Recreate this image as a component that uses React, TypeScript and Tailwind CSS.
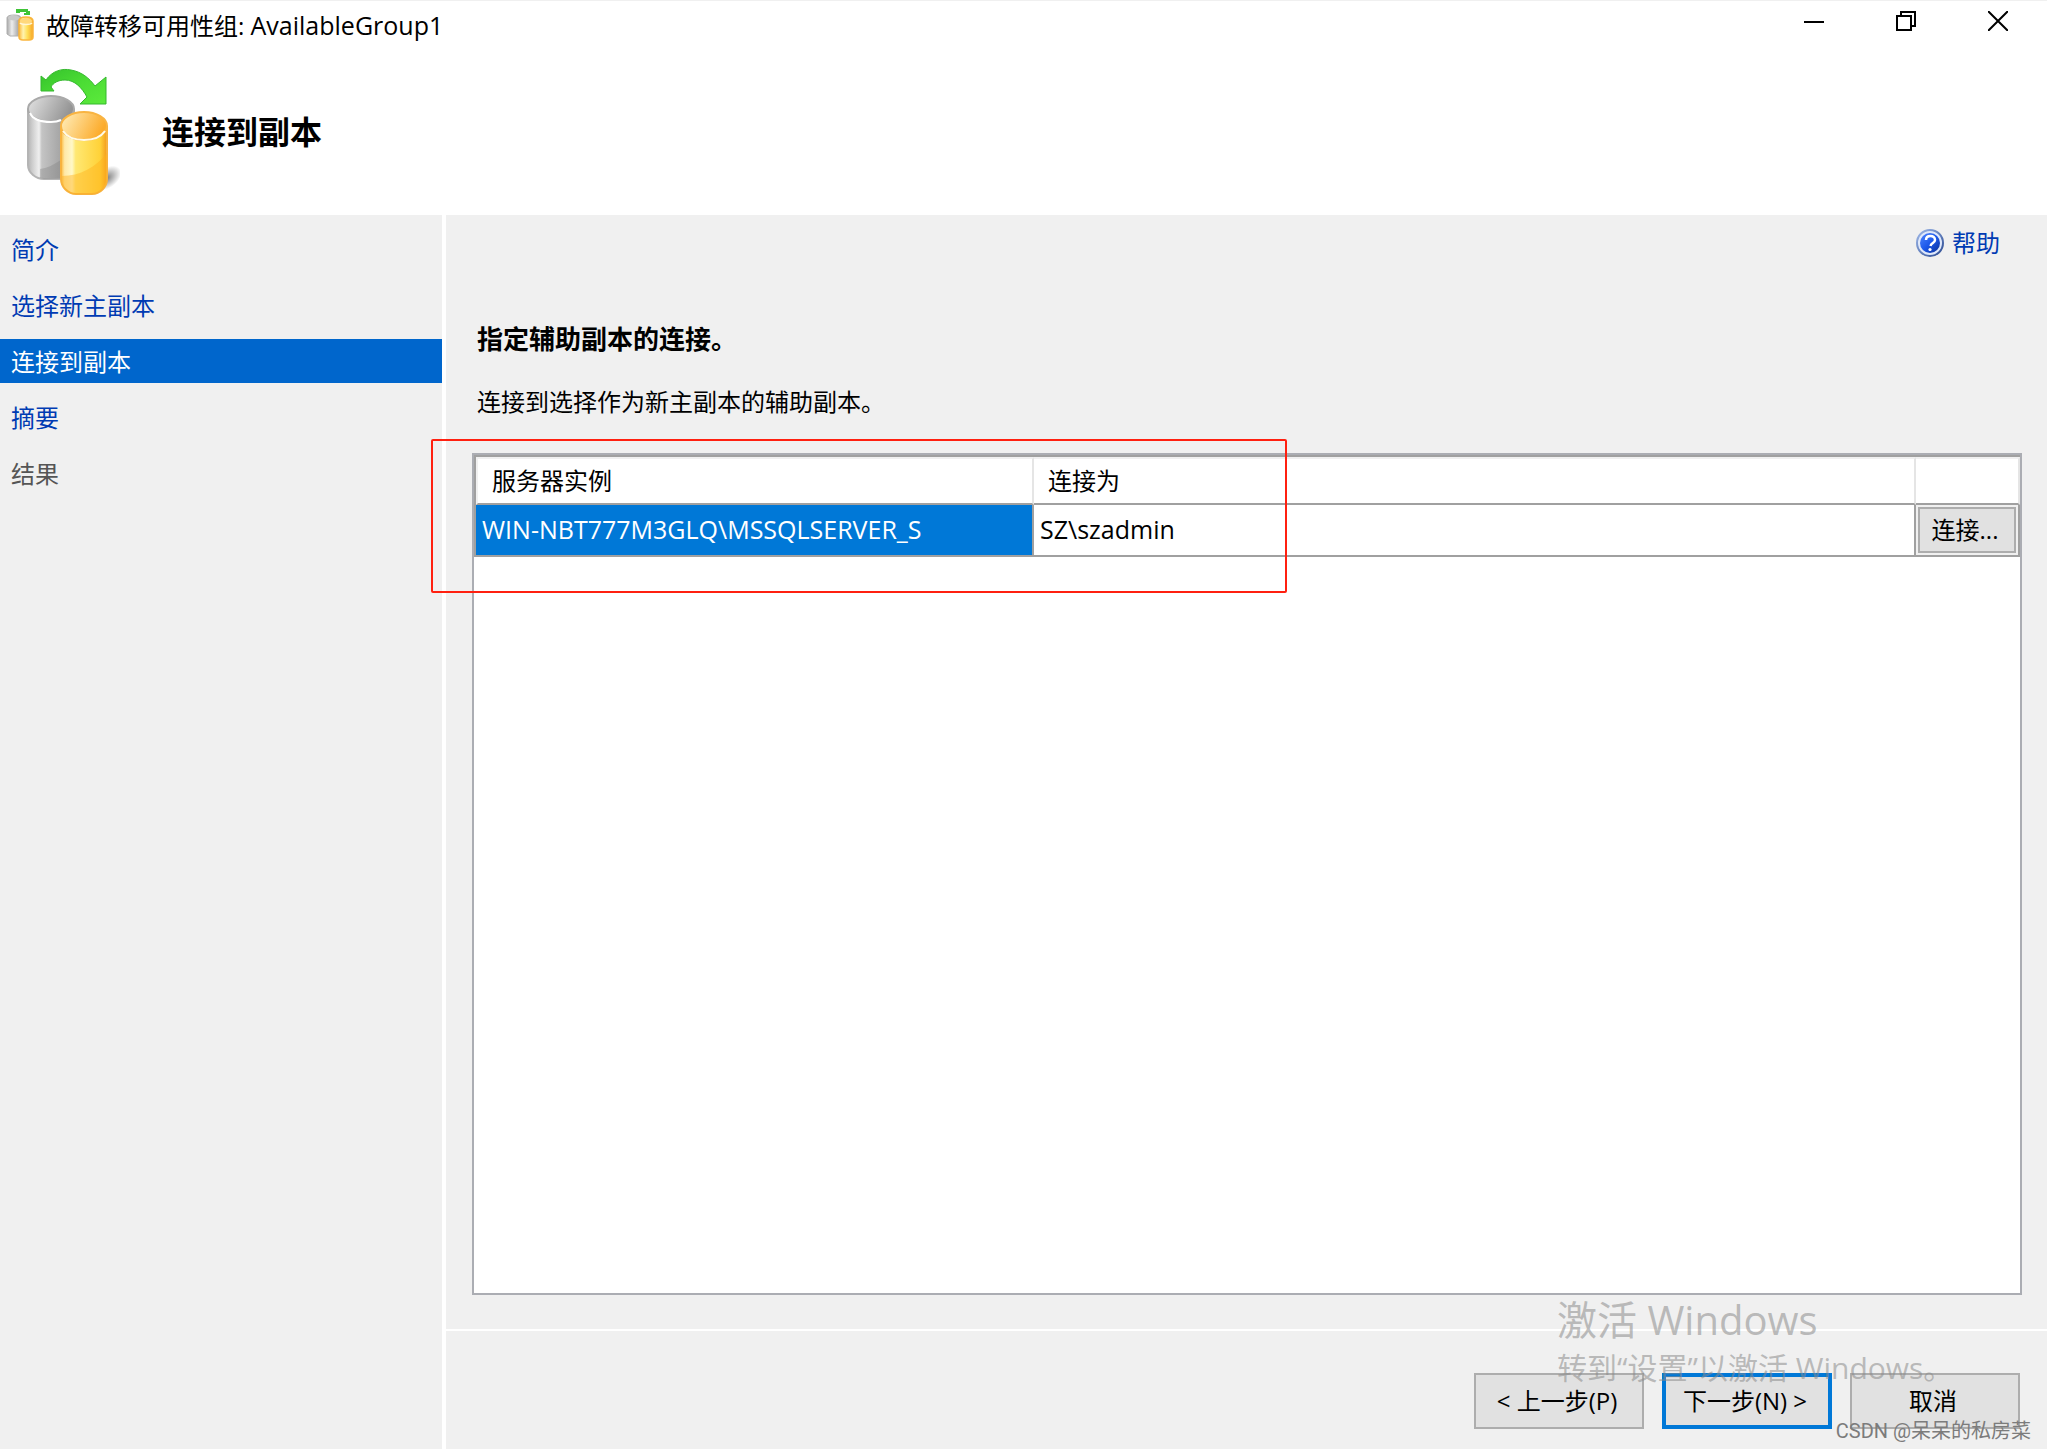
import { useState } from "react";
import { clsx } from "clsx";

const steps = [
  { label: "简介", enabled: true },
  { label: "选择新主副本", enabled: true },
  { label: "连接到副本", enabled: true },
  { label: "摘要", enabled: true },
  { label: "结果", enabled: false },
];

const replicas = [{ server: "WIN-NBT777M3GLQ\\MSSQLSERVER_S", user: "SZ\\szadmin" }];

function FailoverIcon() {
  return (
    <svg viewBox="0 0 94 130" className="h-[130px] w-[94px]" aria-hidden="true">
      <defs>
        <linearGradient id="greyBody" x1="0" x2="1" y1="0" y2="0">
          <stop offset="0" stopColor="#b4b4b4" />
          <stop offset="0.1" stopColor="#cfcfcf" />
          <stop offset="0.24" stopColor="#efefef" />
          <stop offset="0.3" stopColor="#c4c4c4" />
          <stop offset="1" stopColor="#8f8f8f" />
        </linearGradient>
        <linearGradient id="greyTop" x1="0" x2="1" y1="0" y2="0.3">
          <stop offset="0" stopColor="#e4e4e4" />
          <stop offset="1" stopColor="#949494" />
        </linearGradient>
        <linearGradient id="goldBody" x1="0" x2="1" y1="0" y2="0">
          <stop offset="0" stopColor="#fbb83a" />
          <stop offset="0.08" stopColor="#ffe9a8" />
          <stop offset="0.24" stopColor="#fff8c8" />
          <stop offset="0.32" stopColor="#ffe873" />
          <stop offset="0.85" stopColor="#ffd238" />
          <stop offset="1" stopColor="#f39a1c" />
        </linearGradient>
        <linearGradient id="goldTop" x1="0" x2="1" y1="0" y2="0.3">
          <stop offset="0" stopColor="#fff0c0" />
          <stop offset="1" stopColor="#fcab2a" />
        </linearGradient>
        <linearGradient id="arrow" x1="0" x2="1" y1="0" y2="1">
          <stop offset="0" stopColor="#35c22c" />
          <stop offset="0.5" stopColor="#4bdc34" />
          <stop offset="1" stopColor="#5cea3c" />
        </linearGradient>
        <radialGradient id="shadow">
          <stop offset="0" stopColor="#000" stopOpacity="0.5" />
          <stop offset="1" stopColor="#000" stopOpacity="0" />
        </radialGradient>
      </defs>
      <ellipse cx="81" cy="111" rx="16" ry="10" fill="url(#shadow)" transform="rotate(-35 81 111)" />
      <path d="M2 43V98C2 106 10 112 18 112H48V43Z" fill="url(#greyBody)" stroke="#b4b4b4" strokeWidth="2" />
      <path d="M14 102C28 100 40 90 48 80V112H18L14 111Z" fill="#777" opacity="0.3" />
      <ellipse cx="25" cy="42" rx="23" ry="13" fill="url(#greyTop)" stroke="#a9a9a9" strokeWidth="2" />
      <path d="M4 46C7 53 15 55 25 55C31 55 33 54 35 53" fill="none" stroke="#fff" strokeWidth="2" />
      <path d="M35 60V112C35 120 42 127 50 127H66C74 127 81 120 81 112V60Z" fill="url(#goldBody)" stroke="#f7b23e" strokeWidth="2" />
      <path d="M36 109C54 109 70 100 81 86V112C81 120 74 127 66 127H50C42 127 36 120 36 112Z" fill="#ffb21c" opacity="0.45" />
      <ellipse cx="58" cy="59" rx="23" ry="14" fill="url(#goldTop)" stroke="#f9b442" strokeWidth="2" />
      <path d="M37 64C41 70 48 73 58 73S75 70 79 64" fill="none" stroke="#fffbe8" strokeWidth="2" />
      <path d="M15 9L20 13C26 4 36 1 45 3C56 5 63 11 69 19L80 10V37H54L61 30C56 21 49 13 39 13C32 13 27 16 25 20L28 24H15Z" fill="url(#arrow)" stroke="#35b82e" />
    </svg>
  );
}

// title bar version, wider and simpler than the large one
function FailoverIconSmall() {
  return (
    <svg viewBox="0 0 28 32" className="h-8 w-7" aria-hidden="true">
      <defs>
        <linearGradient id="smallGrey" x1="0" x2="1" y1="0" y2="0">
          <stop offset="0" stopColor="#a8a8a8" />
          <stop offset="0.35" stopColor="#ededed" />
          <stop offset="1" stopColor="#8c8c8c" />
        </linearGradient>
        <linearGradient id="smallGold" x1="0" x2="1" y1="0" y2="0">
          <stop offset="0" stopColor="#fcb93c" />
          <stop offset="0.3" stopColor="#fff3b0" />
          <stop offset="0.6" stopColor="#ffdf58" />
          <stop offset="1" stopColor="#f6a526" />
        </linearGradient>
      </defs>
      <path d="M1 9C1 7 4 6 8 6S15 7 15 9V27H4L1 25Z" fill="url(#smallGrey)" stroke="#b0b0b0" />
      <ellipse cx="8" cy="9" rx="6" ry="2.500" fill="#c9c9c9" />
      <path d="M13 12C13 9 16 8 20 8S27 9 27 12V28C27 30 25 31 23 31H17C15 31 13 30 13 28Z" fill="url(#smallGold)" stroke="#fab53c" strokeWidth="1.500" />
      <ellipse cx="20" cy="12" rx="6" ry="3" fill="#ffd87c" />
      <path d="M14 14C16 16 24 16 26 14" fill="none" stroke="#fff6d8" strokeWidth="1.500" />
      <path d="M10 0H22V2H24V6H18V4H20V3H14V4H10Z" fill="#3fc437" />
    </svg>
  );
}

function HelpIcon() {
  return (
    <svg viewBox="0 0 28 28" className="size-7" aria-hidden="true">
      <defs>
        <linearGradient id="helpFill" x1="0" x2="1" y1="0" y2="1">
          <stop offset="0" stopColor="#4f86ff" />
          <stop offset="0.5" stopColor="#1c58ea" />
          <stop offset="1" stopColor="#0b2f93" />
        </linearGradient>
        <linearGradient id="helpRing" x1="0" x2="1" y1="0" y2="1">
          <stop offset="0" stopColor="#9fb9ea" />
          <stop offset="1" stopColor="#2a4a92" />
        </linearGradient>
      </defs>
      <circle cx="14" cy="14" r="13" fill="#dfe8fa" stroke="url(#helpRing)" strokeWidth="2" />
      <circle cx="14" cy="14" r="10" fill="url(#helpFill)" />
      <path d="M10 11C10 8 12 7 14.500 7S19 8.500 19 11C19 14 15 14 14.500 17" fill="none" stroke="#fff" strokeWidth="2.500" />
      <circle cx="14" cy="20.500" r="1.600" fill="#fff" />
    </svg>
  );
}

function TitleBar() {
  return (
    <header className="flex h-[49px] items-center border-t border-[#f0f0f0] pr-[3px] pl-[6px]">
      <FailoverIconSmall />
      <span className="ml-3 flex-1 leading-8">
        故障转移可用性组: <span className="text-[25px]">AvailableGroup1</span>
      </span>
      <div className="flex self-start">
        <button aria-label="最小化" className="flex h-10 w-[92px] items-center justify-center">
          <svg viewBox="0 0 20 20" className="size-5">
            <path d="M0 10H20V12H0Z" />
          </svg>
        </button>
        <button aria-label="向下还原" className="flex h-10 w-[92px] items-center justify-center">
          <svg viewBox="0 0 20 20" className="size-5" fill="none" stroke="#000" strokeWidth="2">
            <path d="M1 5H15V19H1ZM5 5V1H19V15H15" />
          </svg>
        </button>
        <button aria-label="关闭" className="flex h-10 w-[92px] items-center justify-center">
          <svg viewBox="0 0 20 20" className="size-5" stroke="#000" strokeWidth="2">
            <path d="M0 0L20 20M20 0L0 20" />
          </svg>
        </button>
      </div>
    </header>
  );
}

function ReplicaTable() {
  return (
    <div className="relative flex-1 border-2 border-[#abadb3] bg-white">
      <table className="w-full table-fixed border-separate border-spacing-0 border-t-2 border-l-2 border-[#a0a0a0] text-left">
        <colgroup>
          <col className="w-[558px]" />
          <col />
          <col className="w-[104px]" />
        </colgroup>
        <thead>
          <tr className="h-12">
            <th className="border-t-2 border-r-2 border-b-2 border-l-2 border-t-[#f0f0f0] border-r-[#e5e5e5] border-b-[#a0a0a0] border-l-[#f0f0f0] p-0 pl-[14px] leading-8 font-normal">
              服务器实例
            </th>
            <th className="border-t-2 border-r-2 border-b-2 border-t-[#f0f0f0] border-r-[#e5e5e5] border-b-[#a0a0a0] p-0 pl-[14px] leading-8 font-normal">
              连接为
            </th>
            <th className="border-t-2 border-r-2 border-b-2 border-t-[#f0f0f0] border-r-[#e5e5e5] border-b-[#a0a0a0] p-0" />
          </tr>
        </thead>
        <tbody>
          {replicas.map((r) => (
            <tr key={r.server} className="h-[52px] text-[25px]">
              <td className="border-r-2 border-b-2 border-[#a0a0a0] bg-[#0078d7] p-0 pl-[6px] text-white">{r.server}</td>
              <td className="border-r-2 border-b-2 border-[#a0a0a0] p-0 pl-[6px]">{r.user}</td>
              <td className="border-r-2 border-b-2 border-[#a0a0a0] bg-[#f0f0f0] p-[2px]">
                <button className="block h-[46px] w-full border-2 border-[#adadad] bg-[#e1e1e1] pr-1 text-2xl">连接...</button>
              </td>
            </tr>
          ))}
        </tbody>
      </table>
      {/* highlight frame around the instance row */}
      <div className="pointer-events-none absolute -top-4 -left-[43px] h-[154px] w-[856px] rounded-[2px] border-2 border-[#ff2010]" />
    </div>
  );
}

export default function App() {
  const [current, setCurrent] = useState(2);

  return (
    <div className="relative flex min-h-screen flex-col bg-white font-['Open_Sans','Noto_Sans_CJK_SC',sans-serif] text-2xl text-black">
      <TitleBar />
      <div className="flex h-[166px] items-center gap-[42px] pl-[26px]">
        <FailoverIcon />
        <h1 className="text-[32px] leading-10 font-bold">连接到副本</h1>
      </div>

      <div className="flex flex-1 gap-1">
        <nav className="flex w-[442px] shrink-0 flex-col gap-3 bg-[#f0f0f0] pt-3">
          {steps.map((step, i) => (
            <button
              key={step.label}
              disabled={!step.enabled}
              onClick={() => setCurrent(i)}
              className={clsx(
                "flex h-11 items-center pt-[2px] pl-[11px]",
                i === current ? "bg-[#0066cc] text-white" : step.enabled ? "text-[#003bb3]" : "text-[#555555]"
              )}
            >
              {step.label}
            </button>
          ))}
        </nav>

        <div className="flex min-w-0 flex-1 flex-col gap-[2px]">
          <main className="flex flex-1 flex-col bg-[#f0f0f0] pt-3 pr-[25px] pb-[34px] pl-[26px]">
            <a href="#help" className="mr-[22px] flex h-8 items-center gap-2 self-end text-[#003bb3]">
              <HelpIcon />
              帮助
            </a>
            <h2 className="mt-16 h-8 pl-[5px] text-[26px] leading-8 font-bold">指定辅助副本的连接。</h2>
            <p className="mt-[31px] mb-[35px] h-8 pl-[5px] leading-8">连接到选择作为新主副本的辅助副本。</p>
            <ReplicaTable />
          </main>
          <footer className="flex justify-end gap-[18px] bg-[#f0f0f0] pt-[42px] pr-[27px] pb-5">
            <button className="h-14 w-[170px] border-2 border-[#adadad] bg-[#e1e1e1] pr-1">&lt; 上一步(P)</button>
            <button className="h-14 w-[170px] border-4 border-[#0078d7] bg-[#e1e1e1] pr-1">下一步(N) &gt;</button>
            <button className="h-14 w-[170px] border-2 border-[#adadad] bg-[#e1e1e1] pr-1">取消</button>
          </footer>
        </div>
      </div>

      {/* activation notice drawn over the window */}
      <div className="pointer-events-none absolute right-[100px] bottom-[57px] w-[390px] whitespace-nowrap text-[#8a8a8a]/55">
        <p className="text-[40px] leading-[48px]">激活 Windows</p>
        <p className="text-[30px] leading-[48px]">转到“设置”以激活 Windows。</p>
      </div>
      <p className="pointer-events-none absolute right-4 bottom-1 font-[Roboto,'Noto_Sans_CJK_SC',sans-serif] text-[20px] leading-7 text-[#7c7c7c]">
        CSDN @呆呆的私房菜
      </p>
    </div>
  );
}
